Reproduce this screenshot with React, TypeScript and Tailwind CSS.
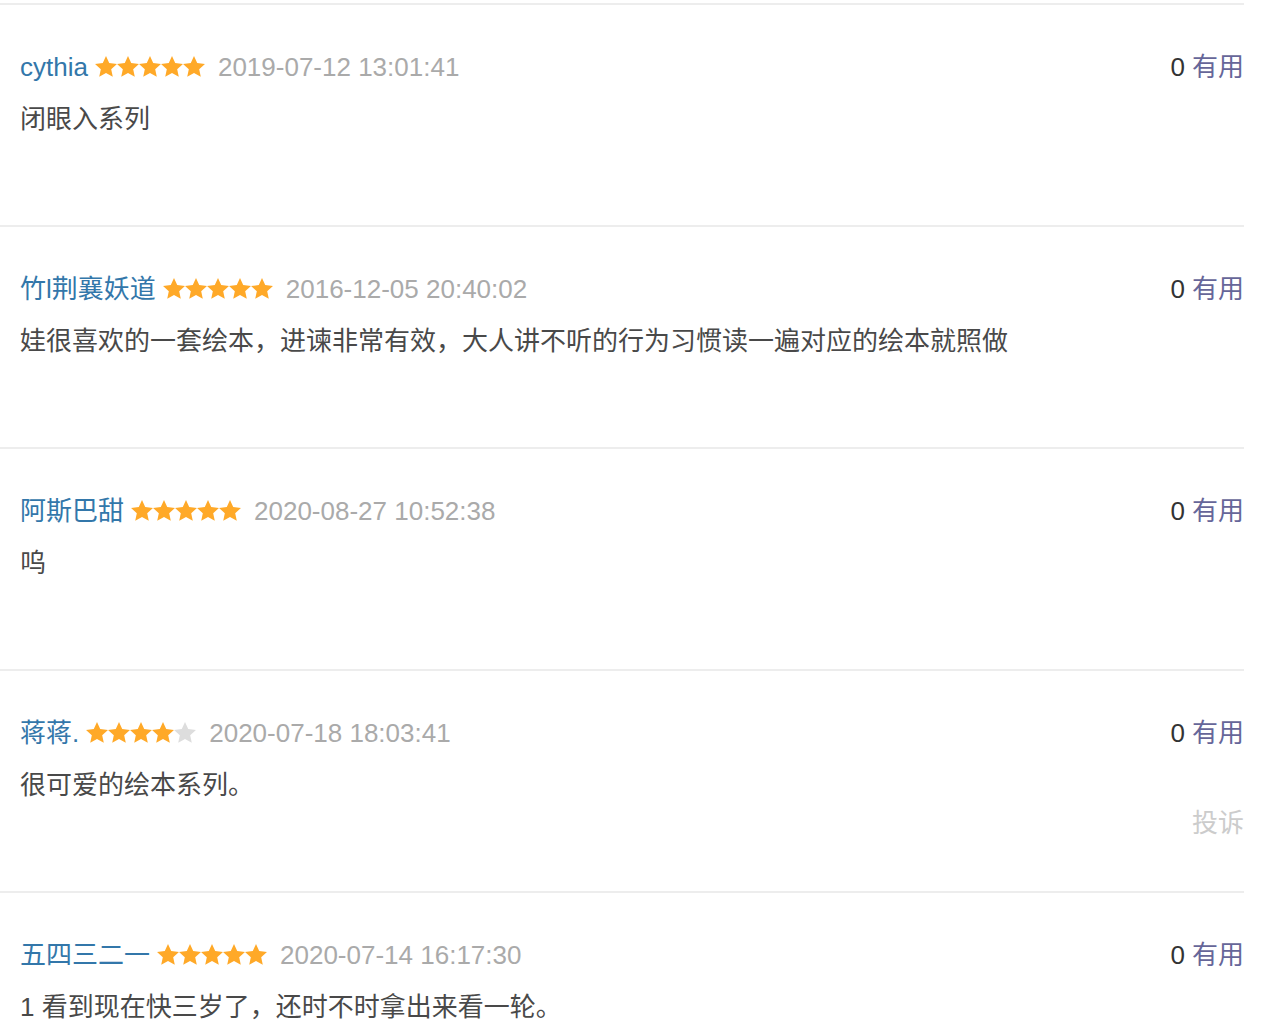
import React from 'react'

interface Review {
  name: string
  stars: number
  time: string
  text: string
  votes: number
  report?: boolean
}

const reviews: Review[] = [
  { name: 'cythia', stars: 5, time: '2019-07-12 13:01:41', text: '闭眼入系列', votes: 0 },
  {
    name: '竹l荆襄妖道',
    stars: 5,
    time: '2016-12-05 20:40:02',
    text: '娃很喜欢的一套绘本，进谏非常有效，大人讲不听的行为习惯读一遍对应的绘本就照做',
    votes: 0,
  },
  { name: '阿斯巴甜', stars: 5, time: '2020-08-27 10:52:38', text: '呜', votes: 0 },
  { name: '蒋蒋.', stars: 4, time: '2020-07-18 18:03:41', text: '很可爱的绘本系列。', votes: 0, report: true },
  {
    name: '五四三二一',
    stars: 5,
    time: '2020-07-14 16:17:30',
    text: '1 看到现在快三岁了，还时不时拿出来看一轮。',
    votes: 0,
  },
]

// single star, filled orange or grey (a bit chunkier than the usual outline star)
const Star: React.FC<{ on: boolean }> = ({ on }) => (
  <svg viewBox="1.5 1.5 21 21" className="w-[22px] h-[22px]">
    <path
      d="M12 1.5L15.06 8.29 22.46 9.1 16.95 14.11 18.47 21.4 12 17.7 5.53 21.4 7.05 14.11 1.54 9.1 8.94 8.29Z"
      fill={on ? '#ffa928' : '#dddddd'}
    />
  </svg>
)

const App: React.FC = () => {
  return (
    <div className="pt-[3px] bg-white min-h-screen font-['Liberation_Sans','Noto_Sans_CJK_SC',sans-serif] text-[26px]">
      {reviews.map(r => (
        <section
          key={r.name}
          className="w-[1244px] h-[222px] border-t-2 border-[#ededed] pt-[44px] pl-[20px] flex flex-col"
        >
          {/* header: name, rating, time + votes */}
          <div className="flex items-center justify-between h-[36px] leading-[36px]">
            <div className="flex items-center">
              <span className="text-[#3377aa]">{r.name}</span>
              <span className="flex ml-[7px]">
                {[1, 2, 3, 4, 5].map(i => (
                  <Star key={i} on={i <= r.stars} />
                ))}
              </span>
              <span className="ml-[13px] text-[#aaaaaa]">{r.time}</span>
            </div>
            <div className="whitespace-nowrap">
              <span className="text-[#333333]">{r.votes}</span>
              <span className="ml-[7px] text-[#666699]">有用</span>
            </div>
          </div>

          <p className="mt-[16px] leading-[36px] text-[#494949]">{r.text}</p>

          {r.report && (
            <span className="self-end mt-[2px] leading-[36px] text-[#cccccc]">投诉</span>
          )}
        </section>
      ))}
    </div>
  )
}

export default App
